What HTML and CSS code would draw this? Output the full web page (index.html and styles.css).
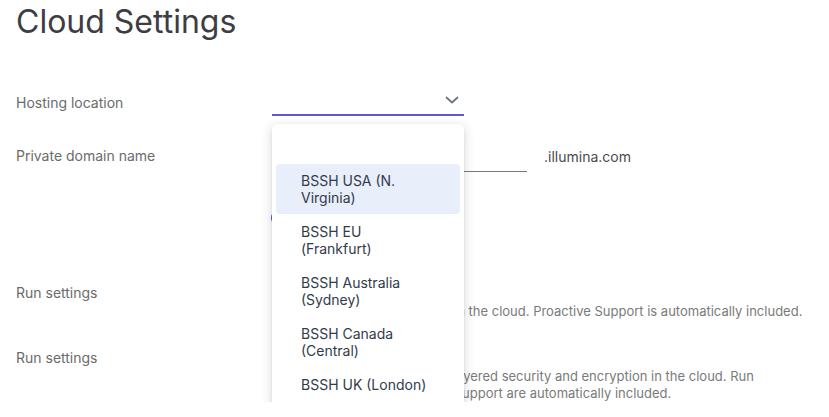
FILE: index.html
```html
<!DOCTYPE html>
<html lang="en">
<head>
<meta charset="utf-8">
<title>Cloud Settings</title>
<link rel="stylesheet" href="styles.css">
</head>
<body>
<div class="page">
  <h1 class="title">Cloud Settings</h1>

  <div class="row row-hosting">
    <div class="label">Hosting location</div>
    <div class="control">
      <div class="select">
        <svg class="chevron" width="14" height="8" viewBox="0 0 14 8"><path d="M1.5 1.5 L7 6.5 L12.5 1.5" fill="none" stroke="#6b7280" stroke-width="1.7" stroke-linecap="round" stroke-linejoin="round"/></svg>
      </div>
      <ul class="menu">
        <li class="option empty"></li>
        <li class="option active">BSSH USA (N. Virginia)</li>
        <li class="option">BSSH EU (Frankfurt)</li>
        <li class="option">BSSH Australia (Sydney)</li>
        <li class="option">BSSH Canada (Central)</li>
        <li class="option">BSSH UK (London)</li>
      </ul>
    </div>
  </div>

  <div class="row row-domain">
    <div class="label">Private domain name</div>
    <div class="control domain">
      <div class="text-input"></div>
      <span class="suffix">.illumina.com</span>
    </div>
  </div>

  <div class="row row-toggle">
    <div></div>
    <div class="control"><span class="toggle"></span></div>
  </div>

  <div class="row row-run">
    <div class="label">Run settings</div>
    <div class="control option-block">
      <div class="opt-title">Standard</div>
      <div class="opt-desc">Stores and analyzes data in the cloud. Proactive Support is automatically included.</div>
    </div>
  </div>

  <div class="row row-run2">
    <div class="label">Run settings</div>
    <div class="control option-block">
      <div class="opt-title">Enhanced</div>
      <div class="opt-desc">Stores and analyzes with layered security and encryption in the cloud. Run Monitoring and Proactive Support are automatically included.</div>
    </div>
  </div>
</div>
</body>
</html>
```

FILE: styles.css
```css
html, body {
  margin: 0;
  padding: 0;
  background: #ffffff;
  font-family: Inter, "Noto Sans", "Liberation Sans", sans-serif;
  overflow: hidden;
}

.page {
  padding: 0 16px;
  position: relative;
}

.title {
  margin: 0;
  height: 44px;
  line-height: 44px;
  font-size: 32px;
  font-weight: 400;
  color: #3d3d42;
  letter-spacing: 0;
}

.row {
  display: grid;
  grid-template-columns: 256px 1fr;
}

.label {
  font-size: 14px;
  line-height: 20px;
  color: #6b6b6b;
}

.control {
  position: relative;
}

/* Hosting location */
.row-hosting {
  margin-top: 42px;
}
.row-hosting .label {
  padding-top: 7px;
}
.select {
  width: 192px;
  height: 28px;
  border-bottom: 2px solid #5b5bd6;
  position: relative;
}
.chevron {
  position: absolute;
  right: 5px;
  top: 10px;
}

.menu {
  position: absolute;
  z-index: 5;
  left: 0;
  top: 38px;
  width: 192px;
  margin: 0;
  padding: 7px 0 5px;
  list-style: none;
  background: #ffffff;
  border-radius: 5px;
  box-shadow: 0 3px 12px rgba(30, 35, 60, 0.18), 0 1px 3px rgba(30, 35, 60, 0.08);
  box-sizing: border-box;
}
.option {
  margin: 0 4px 1px;
  padding: 8px 25px;
  font-size: 14px;
  line-height: 17px;
  color: #323b4a;
  border-radius: 4px;
}
.option.empty {
  height: 16px;
}
.option.active {
  background: #e8eefa;
}

/* Private domain */
.row-domain {
  margin-top: 24px;
}
.row-domain .label {
  padding-top: 6px;
}
.domain {
  display: flex;
  align-items: flex-start;
}
.text-input {
  width: 255px;
  height: 31px;
  border-bottom: 1px solid #7a7a7a;
}
.suffix {
  margin-left: 17px;
  padding-top: 7px;
  font-size: 14px;
  line-height: 20px;
  color: #4a4a4a;
}

/* toggle hidden behind menu */
.row-toggle {
  margin-top: 38px;
}
.toggle {
  display: block;
  margin-left: -1px;
  width: 34px;
  height: 12px;
  border: 2px solid #4b4bc4;
  border-radius: 8px;
}

/* Run settings */
.row-run {
  margin-top: 57px;
}
.row-run2 {
  margin-top: 28px;
}
.option-block {
  padding-left: 24px;
  width: 510px;
}
.opt-title {
  font-size: 14px;
  line-height: 20px;
  color: #333;
}
.opt-desc {
  font-size: 13px;
  line-height: 17px;
  color: #7a7a7a;
}
```
